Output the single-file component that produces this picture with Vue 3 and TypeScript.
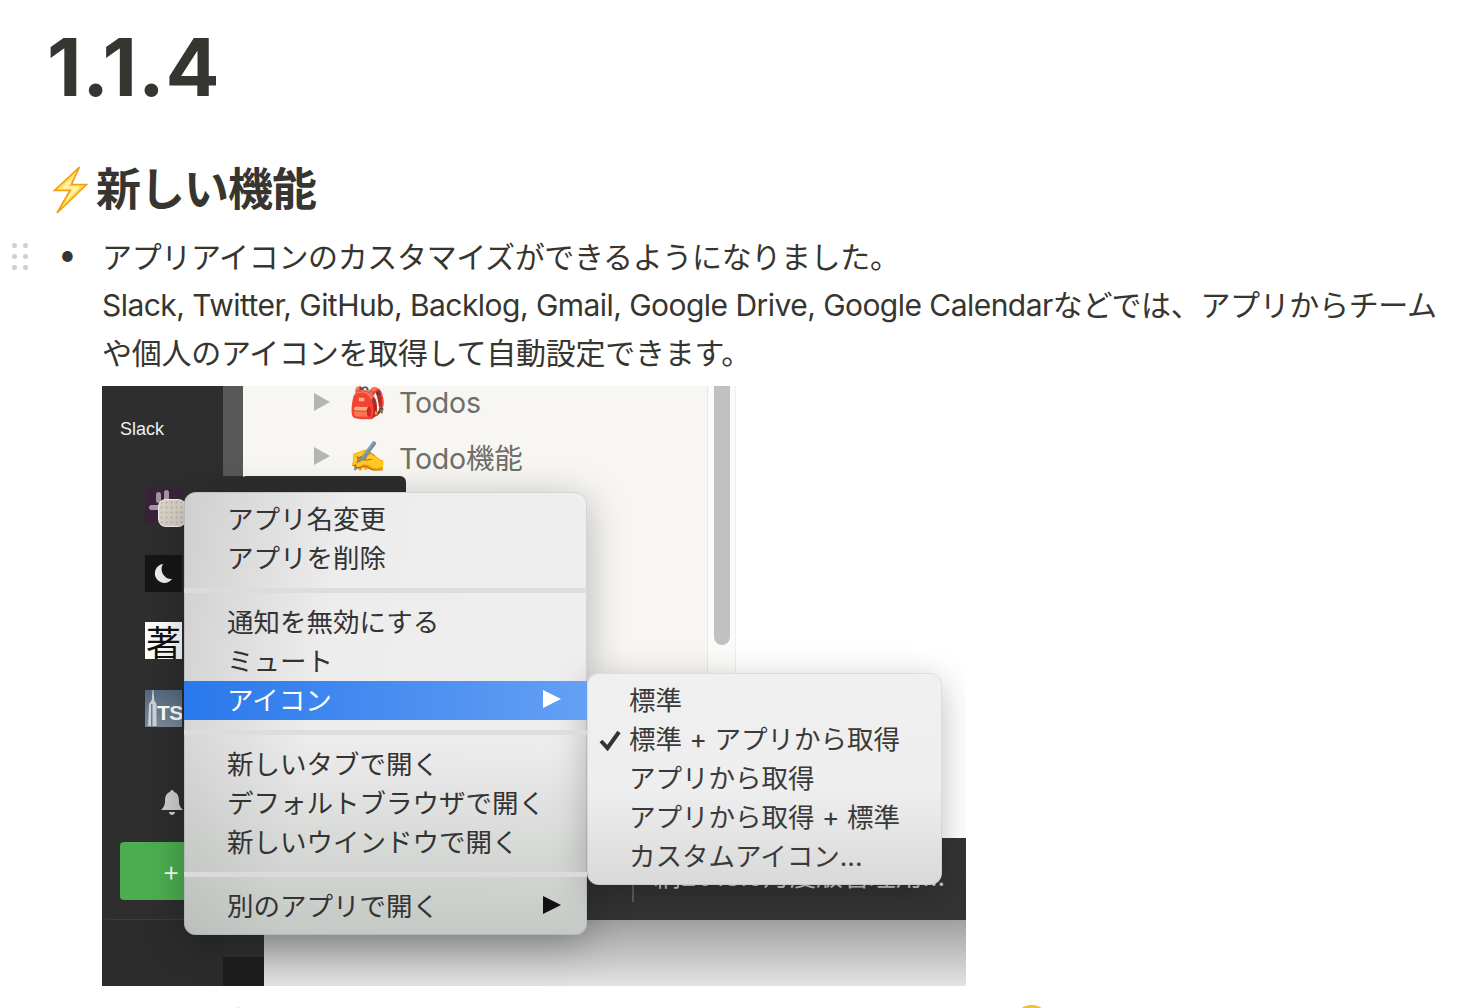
<script setup lang="ts">
const groups: { label: string; active?: boolean; arrow?: boolean }[][] = [
  [{ label: 'アプリ名変更' }, { label: 'アプリを削除' }],
  [{ label: '通知を無効にする' }, { label: 'ミュート' }, { label: 'アイコン', active: true, arrow: true }],
  [{ label: '新しいタブで開く' }, { label: 'デフォルトブラウザで開く' }, { label: '新しいウインドウで開く' }],
  [{ label: '別のアプリで開く', arrow: true }],
]
const sub = [
  { label: '標準' },
  { label: '標準 + アプリから取得', checked: true },
  { label: 'アプリから取得' },
  { label: 'アプリから取得 + 標準' },
  { label: 'カスタムアイコン...' },
]
</script>

<template>
  <main class="page">
    <h1 class="title">1.1.4</h1>
    <h2 class="heading">
      <svg class="bolt" viewBox="0 0 35 48" width="35" height="48" aria-hidden="true">
        <path d="M26.5 1 L1.5 24.5 L17 24.5 L4 47 L33.5 18.5 L18.5 18.5 Z" fill="#ffe25c" stroke="#f59a12" stroke-width="1.6" stroke-linejoin="miter" />
        <path d="M21 10 L8 22.5 L20 22.5 L13 35 L27 20.5 L15 20.5 Z" fill="#fff6b8" />
      </svg>
      <span>新しい機能</span>
    </h2>
    <div class="item">
      <div class="handle" aria-hidden="true"><i v-for="n in 6" :key="n"></i></div>
      <div class="bullet">●</div>
      <div class="body">
        <p>アプリアイコンのカスタマイズができるようになりました。<br /><span class="latin">Slack, Twitter, GitHub, Backlog, Gmail, Google Drive, Google Calendar</span>などでは、アプリからチーム<br /><span class="third">や個人のアイコンを取得して自動設定できます。</span></p>
        <div class="shot">
          <div class="base"></div>
          <aside class="rail">
            <div class="rail-title">Slack</div>
            <div class="app slack">
              <svg viewBox="0 0 36 36" width="36" height="36"><g fill="#a596a3"><rect x="11" y="5" width="5" height="11" rx="2.5"/><rect x="4" y="18" width="12" height="5" rx="2.5"/><rect x="19" y="3" width="5" height="12" rx="2.5"/><rect x="25" y="12" width="7" height="5" rx="2.5"/></g></svg>
              <span class="cursor"></span>
            </div>
            <div class="app moon">
              <svg viewBox="0 0 36 36" width="36" height="36"><path d="M18 9 A9.5 9.5 0 1 0 27 24 A10 10 0 0 1 18 9 Z" fill="#eee"/></svg>
            </div>
            <div class="app cho">著</div>
            <div class="app ts">
              <svg class="tower" viewBox="0 0 36 36" width="36" height="36"><path d="M7.5 0 L8.5 0 L9.2 10 L11.5 14 L11.5 36 L3 36 L4 14 L6.8 10 Z" fill="#ccd2d8"/><path d="M6 14 L7.5 14 L7.5 36 L6 36 Z" fill="#6e7f90"/></svg>
              <span class="ts-label">TS</span>
            </div>
            <svg class="bell" viewBox="0 0 24 28" width="24" height="28"><path d="M12 2 C13 2 14 3 14 4 C18 5 19 9 19 13 C19 18 21 20 23 22 L1 22 C3 20 5 18 5 13 C5 9 6 5 10 4 C10 3 11 2 12 2 Z M9 24 L15 24 C15 26 13 27 12 27 C11 27 9 26 9 24 Z" fill="#cfcfcf"/></svg>
            <div class="add">+</div>
          </aside>
          <div class="strip"></div>
          <section class="sidebar">
            <div class="row first">
              <span class="tri"></span>
              <span class="emoji">🎒</span>
              <span class="row-text">Todos</span>
            </div>
            <div class="row">
              <span class="tri"></span>
              <span class="emoji">✍️</span>
              <span class="row-text">Todo機能</span>
            </div>
            <div class="scrollbar"><span></span></div>
          </section>
          <div class="dark-tab"></div>
          <div class="tooltip"><span class="tip-text">網2018.6月度版管理用...</span></div>
          <div class="footer"></div>

          <div class="menu">
            <template v-for="(g, i) in groups" :key="i">
              <div v-if="i" class="sep"></div>
              <div v-for="m in g" :key="m.label" class="menu-item" :class="{ active: m.active }">
                <span>{{ m.label }}</span>
                <span v-if="m.arrow" class="arrow"></span>
              </div>
            </template>
          </div>
          <div class="submenu">
            <div v-for="s in sub" :key="s.label" class="sub-item">
              <svg v-if="s.checked" class="check" viewBox="0 0 24 24" width="24" height="24"><path d="M3 13 L9.5 20 L21 4" fill="none" stroke="#333" stroke-width="4"/></svg>
              <span>{{ s.label }}</span>
            </div>
          </div>
        </div>
        <p class="cut">アプリの追加メニューからもアイコンを設定できるようになります。<span class="smile">😀</span></p>
      </div>
    </div>
  </main>
</template>

<style>
html, body { margin: 0; background: #fff; overflow: hidden; }
</style>

<style scoped>
.page {
  height: 1008px;
  overflow: hidden;
  padding: 0 0 0 48px;
  box-sizing: border-box;
  color: #37352f;
  font-family: Inter, "Noto Sans CJK JP", sans-serif;
}
.title { margin: 0 0 0 -1px; padding-top: 28px; font-size: 80px; line-height: 78px; font-weight: 700; letter-spacing: 0.8px; }
.heading { margin: 0; padding-top: 54px; display: flex; align-items: center; gap: 8px; font-size: 45px; line-height: 60px; font-weight: 700; letter-spacing: -1px; }
.bolt { flex: none; margin-left: 5px; }
.item { display: flex; margin-top: 13px; position: relative; }
.handle { position: absolute; left: -36px; top: 10px; display: grid; grid-template-columns: 5px 5px; gap: 6px; }
.handle i { width: 5px; height: 5px; border-radius: 50%; background: #cfcfcd; }
.bullet { width: 54px; flex: none; font-size: 14px; line-height: 48px; padding-left: 13px; box-sizing: border-box; }
.body { flex: 1; min-width: 0; }
p { margin: 0; font-size: 30px; line-height: 48px; white-space: nowrap; letter-spacing: -0.35px; }
.latin { letter-spacing: -0.54px; }
.third { letter-spacing: -0.25px; }
.shot { position: relative; width: 864px; height: 600px; margin-top: 9px; overflow: hidden; background: #fff; }
.base { position: absolute; left: 0; top: 0; width: 162px; height: 600px; background: linear-gradient(90deg, #2c2c2c 0, #2c2c2c 75%, #2e2e2e 75%); }
.base::after { content: ""; position: absolute; left: 121px; top: 571px; width: 41px; height: 29px; background: #1e1e1e; }
.rail { position: absolute; left: 0; top: 0; width: 121px; height: 533px; background: #2f2e2e; border-bottom: 1px solid #3c3c3c; border-radius: 0 0 0 6px; }
.rail-title { padding: 33px 0 0 18px; color: #eee; font-family: "Liberation Sans", sans-serif; font-size: 18px; line-height: 20px; }
.app { position: absolute; left: 43px; width: 37px; height: 37px; overflow: visible; }
.slack { top: 101px; background: #3a2338; }
.cursor { position: absolute; left: 14px; top: 13px; width: 26px; height: 26px; border-radius: 7px; background-color: #d9d3c8; background-image: radial-gradient(circle, #c6bfb2 1px, transparent 1.4px); background-size: 5px 5px; box-shadow: 0 0 0 1px #f5f5f5; }
.moon { top: 169px; background: #161616; }
.cho { top: 236px; background: #fff; color: #111; font-family: "Noto Sans CJK JP", sans-serif; font-size: 35px; line-height: 37px; text-align: center; }
.ts { top: 304px; background: linear-gradient(#54697f, #7b8a99); color: #fff; overflow: hidden; }
.tower { position: absolute; left: 0; top: 0; }
.ts-label { position: absolute; left: 12px; top: 10px; font-family: "Liberation Sans", sans-serif; font-size: 21px; line-height: 26px; font-weight: 700; letter-spacing: -0.5px; }
.bell { position: absolute; left: 58px; top: 402px; }
.add { position: absolute; left: 18px; top: 456px; width: 140px; height: 58px; background: #4cae50; border-radius: 4px; color: #fff; font-size: 28px; line-height: 58px; padding-left: 42px; box-sizing: border-box; font-weight: 300; }
.strip { position: absolute; left: 121px; top: 0; width: 20px; height: 90px; background: #585858; }
.sidebar { position: absolute; left: 141px; top: 0; width: 493px; height: 452px; background: #f7f6f3; }
.footer { position: absolute; left: 162px; right: 0; top: 534px; height: 66px; background: linear-gradient(#a0a0a0, #e2e3e2); }
.row { display: flex; align-items: center; height: 54px; padding-left: 71px; }
.row.first { margin-top: -11px; }
.tri { width: 0; height: 0; border-left: 16px solid #b4b4b2; border-top: 9px solid transparent; border-bottom: 9px solid transparent; }
.emoji { margin-left: 19px; width: 37px; flex: none; font-size: 30px; line-height: 36px; }
.row-text { margin-left: 13px; color: #6f6e69; font-size: 28.5px; letter-spacing: -0.2px; }
.scrollbar { position: absolute; right: 0; top: 0; width: 29px; height: 100%; border-left: 1px solid #e8e7e4; border-right: 1px solid #eeeeec; box-sizing: border-box; background: #fbfbfa; }
.scrollbar span { position: absolute; left: 6px; top: 0; width: 16px; height: 259px; border-radius: 0 0 8px 8px; background: #c1c1c1; }
.dark-tab { position: absolute; left: 138px; top: 90px; width: 166px; height: 40px; background: #2f2e2e; border-radius: 6px 6px 0 0; }
.tooltip { position: absolute; left: 400px; right: 0; top: 452px; height: 82px; background: #343434; }
.tip-text { position: absolute; left: 152px; top: 24px; color: #c9c9c9; font-size: 26.5px; line-height: 28px; white-space: nowrap; }
.tooltip::before { content: ""; position: absolute; left: 130px; top: 40px; width: 2px; height: 24px; background: #5c5c5c; }
.menu { position: absolute; left: 82px; top: 106px; width: 403px; height: 443px; box-sizing: border-box; padding-top: 8px; border-radius: 12px; background: linear-gradient(100deg, #cfcfcf 0, #ededed 35%, #eeeeee 100%); box-shadow: 0 8px 40px rgba(0,0,0,.28), inset 0 0 0 1px rgba(0,0,0,.1); overflow: hidden; }
.menu::after { content: ""; position: absolute; inset: 0; pointer-events: none; background: linear-gradient(rgba(255,255,255,0) 55%, rgba(140,150,140,.42) 100%); }
.menu-item { display: flex; align-items: center; justify-content: space-between; height: 39px; box-sizing: border-box; padding: 0 26px 4px 43px; font-size: 26.5px; color: #333; position: relative; z-index: 1; }
.menu-item.active { color: #fff; background: linear-gradient(90deg, #2a78ec, #64a0f5); }
.arrow { width: 0; height: 0; border-left: 18px solid #111; border-top: 9px solid transparent; border-bottom: 9px solid transparent; }
.active .arrow { border-left-color: #fff; }
.sep { height: 5px; margin: 10px 0; background: #dcdcdc; position: relative; z-index: 1; opacity: .9; }
.submenu { position: absolute; left: 485px; top: 287px; width: 355px; height: 212px; box-sizing: border-box; padding-top: 8px; border-radius: 12px; background: linear-gradient(#f0f0f0 0, #eeeeee 55%, #d9d9d9 100%); box-shadow: 0 8px 34px rgba(0,0,0,.25), inset 0 0 0 1px rgba(0,0,0,.08); }
.sub-item { position: relative; height: 39px; line-height: 39px; padding-left: 42px; font-size: 26.5px; color: #3a3a3a; white-space: nowrap; }
.check { position: absolute; left: 11px; top: 8px; }
.cut { margin-top: 10px; letter-spacing: -0.45px; }
.smile { vertical-align: 2px; }
</style>
